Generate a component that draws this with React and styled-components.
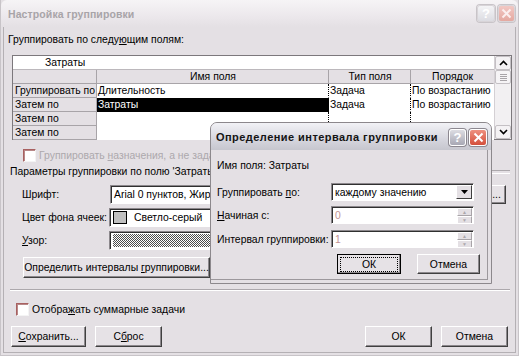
import React from "react"
import styled, { createGlobalStyle } from "styled-components"

const GlobalStyle = createGlobalStyle`
  html, body {
    margin: 0;
    padding: 0;
    background: #e4e0e4;
  }
  body {
    font-family: "Liberation Sans", Arial, sans-serif;
    font-size: 10.4px;
    color: #000;
  }
  * {
    box-sizing: border-box;
  }
`

const Screen = styled.div`
  position: relative;
  width: 519px;
  height: 356px;
  overflow: hidden;
  white-space: nowrap;
`

const Window = styled.div`
  display: flex;
  flex-direction: column;
  width: 519px;
  height: 356px;
  background: #e4e0e4;
  border: 1px solid #c8c4c8;
  border-top: none;
`

const TitleBar = styled.div`
  display: flex;
  align-items: center;
  justify-content: space-between;
  height: ${({ $height }) => $height}px;
  padding: 0 ${({ $right }) => $right}px 0 ${({ $left }) => $left}px;
  font-size: ${({ $active }) => ($active ? 11 : 10.5)}px;
  font-weight: bold;
  letter-spacing: ${({ $active }) => ($active ? 0.45 : 0.1)}px;
  color: ${({ $active }) => ($active ? "#141414" : "#a8a4a8")};
  background: ${({ $active }) =>
    $active
      ? "linear-gradient(#f2f2f6, #d8d8e0 55%, #c6c6ce)"
      : "linear-gradient(#f6f4f6, #ece8ec 60%, #e4e0e4)"};
  border-radius: 6px 6px 0 0;
`

const TitleButtons = styled.div`
  display: flex;
  gap: 3px;
  padding-top: ${({ $top }) => $top}px;
  letter-spacing: 0;
`

const CaptionButton = styled.div`
  display: flex;
  align-items: center;
  justify-content: center;
  width: ${({ $w }) => $w}px;
  height: 17px;
  border: 1px solid ${({ $faded }) => ($faded ? "#d8d4d8" : "#ffffff")};
  border-radius: 3px;
  background: ${({ $red, $faded }) =>
    $red
      ? $faded
        ? "linear-gradient(#f2c8c4, #e4a8a0)"
        : "linear-gradient(#ee9080, #d4503c)"
      : $faded
      ? "linear-gradient(#f4f4f6, #dcdce2)"
      : "linear-gradient(#dcdce2, #a8a8b4)"};
  box-shadow: 0 0 0 1px ${({ $faded }) => ($faded ? "#c8c4c8" : "#8c8890")};
  color: #fff;
  font-size: 13px;
  font-weight: bold;
  line-height: 1;
`

const Body = styled.div`
  display: flex;
  flex-direction: column;
  flex: 1;
  margin: 0 2px 2px 2px;
  padding-left: 4px;
  border: 1px solid #b4b0b4;
  border-top: none;
`

const Heading = styled.div`
  margin-top: 6px;
  height: 14px;
  line-height: 14px;
`

const Grid = styled.div`
  display: flex;
  margin: 8px 0 0 4px;
  width: 500px;
  height: 85px;
  border: 1px solid #7c787c;
  background: #fff;
`

const Table = styled.div`
  display: flex;
  flex-direction: column;
  flex: 1;
`

const EditRow = styled.div`
  height: 14px;
  line-height: 13px;
  padding-left: 32px;
  border-bottom: 1px solid #bcb8bc;
`

const Row = styled.div`
  display: grid;
  grid-template-columns: 84px 232px 82px 83px;
  height: 14px;
`

const Cell = styled.div`
  height: 14px;
  line-height: 13px;
  padding-left: ${({ $kind }) => ($kind === "row" ? 2 : 1)}px;
  overflow: hidden;
  text-align: ${({ $kind }) => ($kind === "head" ? "center" : "left")};
  background: ${({ $kind }) =>
    $kind === "head" || $kind === "row" ? "#e4e0e4" : $kind === "sel" ? "#000" : "#fff"};
  color: ${({ $kind }) => ($kind === "sel" ? "#fff" : "#000")};
  border-right: 1px ${({ $kind }) => ($kind === "data" || $kind === "sel" ? "dotted" : "solid")}
    ${({ $kind, $last }) =>
      $last ? "transparent" : $kind === "data" || $kind === "sel" ? "#000" : "#a8a4a8"};
  border-bottom: 1px solid
    ${({ $kind }) => ($kind === "head" || $kind === "row" ? "#a8a4a8" : "transparent")};
`

const Scrollbar = styled.div`
  display: flex;
  flex-direction: column;
  width: 17px;
  background: #f2f0f2;
  border-left: 1px solid #d4d0d4;
`

const ScrollButton = styled.div`
  display: flex;
  align-items: center;
  justify-content: center;
  height: 14px;
  background: #f4f2f4;
  border: 1px solid #c4c0c4;
  border-radius: 2px;
`

const ScrollTrack = styled.div`
  flex: 1;
`

const Thumb = styled.div`
  display: flex;
  flex-direction: column;
  align-items: center;
  justify-content: center;
  gap: 1px;
  height: 14px;
  border: 1px solid #c4c0c4;
  border-radius: 2px;
  background: #f6f4f6;

  span {
    width: 7px;
    height: 1px;
    background: #a8a4a8;
  }
`

const CheckRow = styled.label`
  display: flex;
  align-items: center;
  gap: 3px;
  height: 14px;
  margin: ${({ $top }) => $top}px 0 0 ${({ $left }) => $left}px;
  color: ${({ $disabled }) => ($disabled ? "#aca8ac" : "#000")};
`

const CheckBox = styled.span`
  width: 13px;
  height: 13px;
  background: #fff;
  border: 1px solid;
  border-color: #a86060 #f4f4f4 #f4f4f4 #a86060;
  box-shadow: inset 1px 1px 0 #b88888;
`

const GroupHeading = styled.div`
  display: flex;
  align-items: center;
  gap: 4px;
  height: 14px;
  margin: 3px 5px 0 2px;
  line-height: 14px;

  &::after {
    content: "";
    flex: 1;
    height: 2px;
    border-top: 1px solid #aca8ac;
    border-bottom: 1px solid #fff;
  }
`

const FieldRow = styled.div`
  display: flex;
  align-items: center;
  height: 19px;
  margin: ${({ $top }) => $top}px 0 0 14px;
`

const FieldLabel = styled.div`
  width: ${({ $w }) => $w || 88}px;
`

const Sunken = styled.div`
  display: flex;
  align-items: center;
  width: ${({ $w }) => $w}px;
  height: ${({ $h }) => $h || 19}px;
  padding: 1px 1px 1px 3px;
  background: #fff;
  border: 1px solid;
  border-color: #8c888c #fff #fff #8c888c;
  box-shadow: inset 1px 1px 0 #303030;
  color: ${({ $disabled }) => ($disabled ? "#c49494" : "#000")};
  overflow: hidden;
`

const Swatch = styled.span`
  width: 14px;
  height: 13px;
  margin-right: 7px;
  background: #c0c0c0;
  border: 1px solid #000;
`

const Pattern = styled.span`
  flex: 1;
  align-self: stretch;
  margin: 1px 0;
  background: repeating-conic-gradient(#000 0 25%, #fff 0 50%) 0 0 / 2px 2px;
  opacity: 0.7;
`

const DropButton = styled.span`
  display: flex;
  align-items: center;
  justify-content: center;
  margin-left: auto;
  width: 16px;
  height: 14px;
  background: #e4e0e4;
  border: 1px solid;
  border-color: #fff #404040 #404040 #fff;
`

const SpinButtons = styled.span`
  display: flex;
  flex-direction: column;
  margin-left: auto;
  width: 15px;
  height: 14px;

  span {
    flex: 1;
    display: flex;
    align-items: center;
    justify-content: center;
    background: #e4e0e4;
    border: 1px solid;
    border-color: #fff #a8a4a8 #a8a4a8 #fff;
    font-size: 5px;
    color: #aca8ac;
  }
`

const Button = styled.div`
  display: flex;
  align-items: center;
  justify-content: center;
  width: ${({ $w }) => $w}px;
  height: ${({ $h }) => $h || 21}px;
  background: #e6e2e6;
  border: 1px solid;
  border-color: #fff #404040 #404040 #fff;
  box-shadow: inset -1px -1px 0 #8c888c;
  ${({ $default }) =>
    $default &&
    `
    outline: 1px solid #000;
    outline-offset: -1px;
  `}

  span {
    padding: 0 ${({ $focus }) => ($focus ? 20 : 0)}px;
    ${({ $focus }) => $focus && "outline: 1px dotted #000; outline-offset: 1px;"}
  }
`

const ActionButton = styled(Button)`
  margin: ${({ $top }) => $top}px 0 0 15px;
`

const Separator = styled.div`
  height: 2px;
  margin: 11px 5px 0 2px;
  border-top: 1px solid #aca8ac;
  border-bottom: 1px solid #fff;
`

const ButtonBar = styled.div`
  display: flex;
  gap: 9px;
  margin: 10px 0 0 0;
  padding: 0 7px 0 3px;
`

const Spacer = styled.div`
  flex: 1;
`

const Dialog = styled.div`
  position: absolute;
  left: 210px;
  top: 122px;
  width: 282px;
  height: 162px;
  display: flex;
  flex-direction: column;
  background: #e4e0e4;
  border: 1px solid #8c888c;
  border-radius: 7px 7px 0 0;
  box-shadow: inset -3px -3px 0 #e4e0e4, inset -4px -4px 0 #9c989c;
`

const DialogBody = styled.div`
  display: flex;
  flex-direction: column;
  padding: 0 0 0 6px;
`

const InfoLine = styled.div`
  height: 14px;
  margin-top: 9px;
  line-height: 14px;
`

const FormRow = styled.div`
  display: flex;
  align-items: center;
  height: 18px;
  margin-top: ${({ $top }) => $top}px;
`

const DialogButtons = styled.div`
  display: flex;
  gap: 16px;
  margin: 6px 0 0 120px;
`

const Arrow = ({ down, color = "#000" }) => (
  <svg width="9" height="6" viewBox="0 0 9 6">
    <path
      d={down ? "M1 1 L4.5 4.5 L8 1" : "M1 5 L4.5 1.5 L8 5"}
      fill="none"
      stroke={color}
      strokeWidth="1.6"
    />
  </svg>
)

const Triangle = () => (
  <svg width="7" height="4" viewBox="0 0 7 4">
    <path d="M0 0 H7 L3.5 4 Z" fill="#000" />
  </svg>
)

const CloseGlyph = ({ faded }) => (
  <svg width="11" height="11" viewBox="0 0 11 11">
    <path d="M1.5 1.5 L9.5 9.5 M9.5 1.5 L1.5 9.5" stroke={faded ? "#fbeeee" : "#fff"} strokeWidth="2" />
  </svg>
)

const rows = [
  ["Группировать по", "Длительность", "Задача", "По возрастанию", false],
  ["Затем по", "Затраты", "Задача", "По возрастанию", true],
  ["Затем по", "", "", "", false],
  ["Затем по", "", "", "", false],
]

const App = () => {
  return (
    <Screen>
      <GlobalStyle />
      <Window>
        <TitleBar $height={27} $left={7} $right={3}>
          Настройка группировки
          <TitleButtons $top={0}>
            <CaptionButton $w={18} $faded>?</CaptionButton>
            <CaptionButton $w={17} $red $faded>
              <CloseGlyph faded />
            </CaptionButton>
          </TitleButtons>
        </TitleBar>
        <Body>
          <Heading>
            Группировать по следу<u>ю</u>щим полям:
          </Heading>
          <Grid>
            <Table>
              <EditRow>Затраты</EditRow>
              <Row>
                <Cell $kind="head" />
                <Cell $kind="head">Имя поля</Cell>
                <Cell $kind="head">Тип поля</Cell>
                <Cell $kind="head" $last>
                  Порядок
                </Cell>
              </Row>
              {rows.map(([label, name, type, order, selected], i) => (
                <Row key={i}>
                  <Cell $kind="row">{label}</Cell>
                  <Cell $kind={selected ? "sel" : "data"}>{name}</Cell>
                  <Cell $kind="data">{type}</Cell>
                  <Cell $kind="data" $last>
                    {order}
                  </Cell>
                </Row>
              ))}
            </Table>
            <Scrollbar>
              <ScrollButton>
                <Arrow />
              </ScrollButton>
              <Thumb>
                <span />
                <span />
                <span />
                <span />
              </Thumb>
              <ScrollTrack />
              <ScrollButton>
                <Arrow down />
              </ScrollButton>
            </Scrollbar>
          </Grid>

          <CheckRow $top={8} $left={15} $disabled>
            <CheckBox />
            <span>
              Группировать <u>н</u>азначения, а не задачи
            </span>
          </CheckRow>

          <GroupHeading>Параметры группировки по полю 'Затраты'</GroupHeading>

          <FieldRow $top={6}>
            <FieldLabel>Шрифт:</FieldLabel>
            <Sunken $w={370}>Arial 0 пунктов, Жирный</Sunken>
            <Button $w={19} $h={19} style={{ marginLeft: 7 }}>
              ...
            </Button>
          </FieldRow>
          <FieldRow $top={4}>
            <FieldLabel $w={87}>Цвет фона ячеек:</FieldLabel>
            <Sunken $w={230}>
              <Swatch />
              Светло-серый
              <DropButton>
                <Triangle />
              </DropButton>
            </Sunken>
          </FieldRow>
          <FieldRow $top={4}>
            <FieldLabel $w={87}>
              <u>У</u>зор:
            </FieldLabel>
            <Sunken $w={230}>
              <Pattern />
            </Sunken>
          </FieldRow>

          <ActionButton $w={187} $top={7}>
            <span>
              Определить интервалы <u>г</u>руппировки...
            </span>
          </ActionButton>

          <Separator />

          <CheckRow $top={11} $left={8}>
            <CheckBox />
            <span>
              Отобра<u>ж</u>ать суммарные задачи
            </span>
          </CheckRow>

          <ButtonBar>
            <Button $w={75}>
              <span>
                <u>С</u>охранить...
              </span>
            </Button>
            <Button $w={67}>
              <span>
                С<u>б</u>рос
              </span>
            </Button>
            <Spacer />
            <Button $w={67}>
              <span>ОК</span>
            </Button>
            <Button $w={67}>
              <span>Отмена</span>
            </Button>
          </ButtonBar>
        </Body>
      </Window>

      <Dialog>
        <TitleBar $height={27} $left={5} $right={4} $active>
          Определение интервала группировки
          <TitleButtons $top={2}>
            <CaptionButton $w={17}>?</CaptionButton>
            <CaptionButton $w={18} $red>
              <CloseGlyph />
            </CaptionButton>
          </TitleButtons>
        </TitleBar>
        <DialogBody>
          <InfoLine>Имя поля: Затраты</InfoLine>
          <FormRow $top={10}>
            <FieldLabel $w={114}>
              Группировать <u>п</u>о:
            </FieldLabel>
            <Sunken $w={143} $h={18}>
              каждому значению
              <DropButton>
                <Triangle />
              </DropButton>
            </Sunken>
          </FormRow>
          <FormRow $top={5}>
            <FieldLabel $w={114}>
              <u>Н</u>ачиная с:
            </FieldLabel>
            <Sunken $w={143} $h={18} $disabled>
              0
              <SpinButtons>
                <span>▲</span>
                <span>▼</span>
              </SpinButtons>
            </Sunken>
          </FormRow>
          <FormRow $top={6}>
            <FieldLabel $w={114}>Интервал группировки:</FieldLabel>
            <Sunken $w={143} $h={18} $disabled>
              1
              <SpinButtons>
                <span>▲</span>
                <span>▼</span>
              </SpinButtons>
            </Sunken>
          </FormRow>
          <DialogButtons>
            <Button $w={64} $h={20} $default $focus>
              <span>ОК</span>
            </Button>
            <Button $w={63} $h={20}>
              <span>Отмена</span>
            </Button>
          </DialogButtons>
        </DialogBody>
      </Dialog>
    </Screen>
  )
}

export default App
